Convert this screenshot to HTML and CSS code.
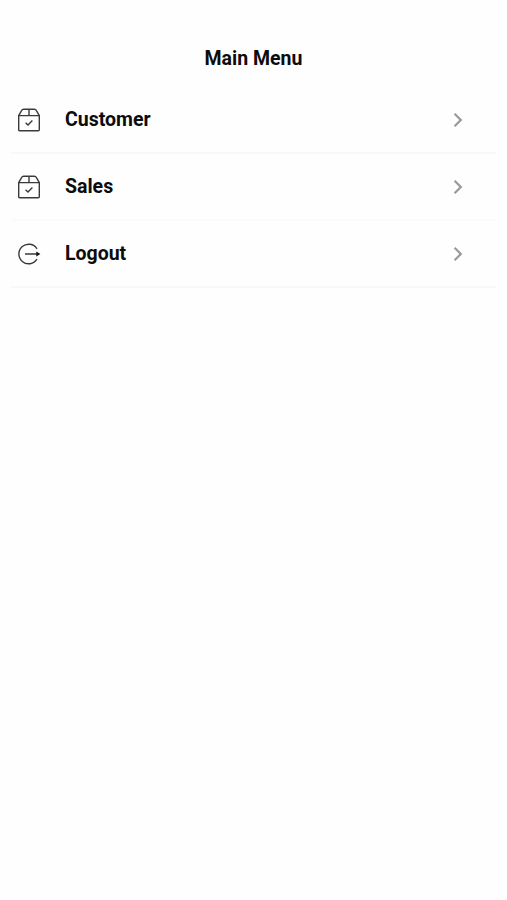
FILE: index.html
```html
<!DOCTYPE html>
<html lang="en">
<head>
<meta charset="utf-8">
<title>Main Menu</title>
<link rel="stylesheet" href="styles.css">
</head>
<body>
<svg class="defs" width="0" height="0" aria-hidden="true">
  <symbol id="box" viewBox="0 0 24 24"><path d="M1.7 7.6H22.3V21.8Q22.3 22.8 21.3 22.8H2.7Q1.7 22.8 1.7 21.8ZL4.4 2.8Q5.2 1.2 6.8 1.2H17.2Q18.8 1.2 19.6 2.8L22.3 7.6M12 1.2V7.6M8.6 14.7L11 17L15.4 12.6"/></symbol>
  <symbol id="logout" viewBox="0 0 24 24"><path d="M20 6.8A9.8 9.8 0 1 0 20 17.2M8 12H20"/><path class="tip" d="M19.3 9.6L23.4 12L19.3 14.4Z"/></symbol>
  <symbol id="chevron" viewBox="0 0 12 16"><path d="M2.6 1.8L8.8 8L2.6 14.2"/></symbol>
</svg>
<header class="title">Main Menu</header>
<nav class="menu">
  <a class="item"><svg class="icon"><use href="#box"/></svg><span class="label">Customer</span><svg class="chevron"><use href="#chevron"/></svg></a>
  <a class="item faint"><svg class="icon"><use href="#box"/></svg><span class="label">Sales</span><svg class="chevron"><use href="#chevron"/></svg></a>
  <a class="item"><svg class="icon"><use href="#logout"/></svg><span class="label">Logout</span><svg class="chevron"><use href="#chevron"/></svg></a>
</nav>
</body>
</html>
```
FILE: styles.css
```css
body {
  margin: 0;
  min-height: 900px;
  background: #fefefe;
  color: #0c0c0c;
  font: 700 19.5px/24px Roboto, sans-serif;
}
.defs { display: block; }
.title {
  padding-top: 47px;
  text-align: center;
}
.menu {
  margin: 16px 11px 0;
}
.item {
  display: flex;
  align-items: center;
  box-sizing: border-box;
  height: 67px;
  padding: 0 32px 0 6px;
  border-bottom: 2px solid #f8f8f8;
}
.faint { border-bottom-color: #fbfbfb; }
.icon {
  width: 24px;
  height: 24px;
  margin-right: 24px;
  fill: none;
  stroke: #3a3a3a;
  stroke-width: 1.4;
}
.tip { fill: #111; stroke: none; }
.label { flex: 1; }
.chevron {
  width: 12px;
  height: 16px;
  fill: none;
  stroke: #999;
  stroke-width: 2.2;
}
```
